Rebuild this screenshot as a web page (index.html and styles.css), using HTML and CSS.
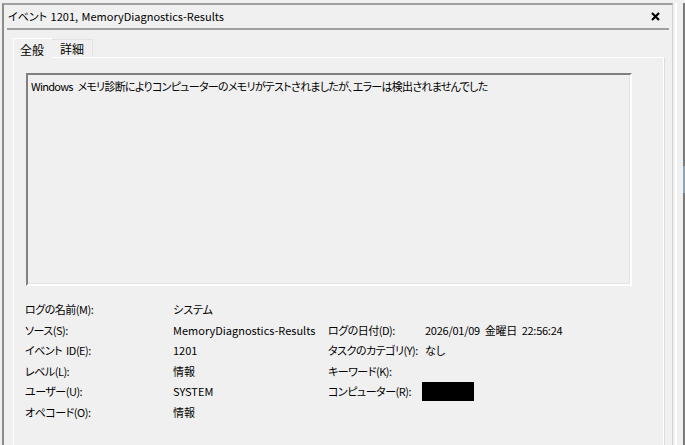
FILE: index.html
```html
<!DOCTYPE html>
<html>
<head>
    <meta charset="utf-8">
    <title>イベント 1201, MemoryDiagnostics-Results</title>
    <link rel="stylesheet" href="styles.css">
</head>
<body>
    <div class="screen">
        <div class="window">
            <div class="title-bar">
                <span class="title">イベント 1201, MemoryDiagnostics-Results</span>
                <svg class="close" width="9" height="9" viewBox="0 0 9 9">
                    <path d="M1 1 L8 8 M8 1 L1 8" stroke="#000" stroke-width="2.2" fill="none"/>
                </svg>
            </div>
            <div class="title-rule"></div>

            <div class="tabs">
                <div class="tab active">全般</div>
                <div class="tab">詳細</div>
            </div>

            <div class="panel">
                <div class="message-box">Windows メモリ診断によりコンピューターのメモリがテストされましたが、エラーは検出されませんでした</div>

                <div class="props">
                    <div class="label">ログの名前(M):</div>
                    <div class="value">システム</div>
                    <div></div>
                    <div></div>

                    <div class="label">ソース(S):</div>
                    <div class="value">MemoryDiagnostics-Results</div>
                    <div class="label">ログの日付(D):</div>
                    <div class="value date">2026/01/09 金曜日 22:56:24</div>

                    <div class="label">イベント ID(E):</div>
                    <div class="value">1201</div>
                    <div class="label">タスクのカテゴリ(Y):</div>
                    <div class="value">なし</div>

                    <div class="label">レベル(L):</div>
                    <div class="value">情報</div>
                    <div class="label">キーワード(K):</div>
                    <div class="value"></div>

                    <div class="label">ユーザー(U):</div>
                    <div class="value">SYSTEM</div>
                    <div class="label">コンピューター(R):</div>
                    <div class="value"><span class="redacted"></span></div>

                    <div class="label">オペコード(O):</div>
                    <div class="value">情報</div>
                    <div></div>
                    <div></div>
                </div>
            </div>
        </div>
        <div class="side">
            <div class="side-mark"></div>
        </div>
    </div>
</body>
</html>
```

FILE: styles.css
```css
body {
    margin: 0;
    padding: 0;
    background-color: #f0f0f0;
    font-family: "Noto Sans CJK JP", "Noto Sans", sans-serif;
    font-size: 11px;
    font-feature-settings: "palt";
    color: #000;
    overflow: hidden;
}
.screen {
    display: flex;
    height: 445px;
    padding-top: 3px;
    box-sizing: border-box;
}
.window {
    margin-left: 2px;
    width: 674px;
    border-top: 2px solid #a0a0a0;
    border-left: 2px solid #8c8c8c;
    border-right: 1px solid #d0d0d0;
    box-sizing: border-box;
}
.title-bar {
    display: flex;
    align-items: center;
    justify-content: space-between;
    height: 23px;
    padding: 0 12px 0 4px;
}
.title {
    line-height: 23px;
    word-spacing: 1px;
}
.close {
    display: block;
}
.title-rule {
    height: 2px;
    margin: 0 3px;
    background-color: #a0a0a0;
}
.tabs {
    display: flex;
    align-items: flex-end;
    height: 27px;
    padding-left: 9px;
    font-size: 12px;
}
.tab {
    height: 17px;
    padding: 0 8px;
    line-height: 17px;
    border-top: 1px solid #e3e3e3;
    border-right: 1px solid #e3e3e3;
    background-color: #f0f0f0;
}
.tab.active {
    height: 19px;
    padding: 0 8px 0 6px;
    line-height: 21px;
    border-top: 1px solid #fff;
    border-left: 1px solid #fff;
    border-right: none;
    margin-bottom: -1px;
    position: relative;
    z-index: 1;
}
.panel {
    margin-left: 9px;
    width: 652px;
    height: 400px;
    padding: 15px 0 0 12px;
    border-top: 1px solid #fff;
    border-left: 1px solid #fff;
    border-right: 1px solid #dcdcdc;
    box-shadow: inset -1px 0 #fff;
    box-sizing: border-box;
}
.message-box {
    width: 606px;
    height: 213px;
    padding: 3px 3px;
    box-sizing: border-box;
    border-top: 2px solid #808080;
    border-left: 2px solid #808080;
    border-right: 2px solid #fff;
    border-bottom: 2px solid #fff;
    box-shadow: inset -1px -1px #e3e3e3;
    line-height: 16px;
    letter-spacing: -0.72px;
    word-spacing: 3px;
}
.props {
    display: grid;
    grid-template-columns: 148px 155px 97px 1fr;
    grid-auto-rows: 20.5px;
    align-items: center;
    margin-top: 13px;
    margin-left: -1px;
}
.label, .value {
    white-space: nowrap;
}
.label {
    letter-spacing: -0.5px;
    word-spacing: 2px;
}
.date {
    letter-spacing: -0.25px;
    word-spacing: 2.5px;
}
.redacted {
    display: inline-block;
    width: 52px;
    height: 19px;
    margin-left: -3px;
    vertical-align: middle;
    background-color: #000;
}
.side {
    margin-left: 2px;
    width: 6px;
    border-left: 2px solid #fff;
    border-right: 2px solid #7a7a7a;
    position: relative;
}
.side-mark {
    position: absolute;
    right: -2px;
    top: 163px;
    width: 2px;
    height: 27px;
    background-color: #8fa6b8;
}
```
